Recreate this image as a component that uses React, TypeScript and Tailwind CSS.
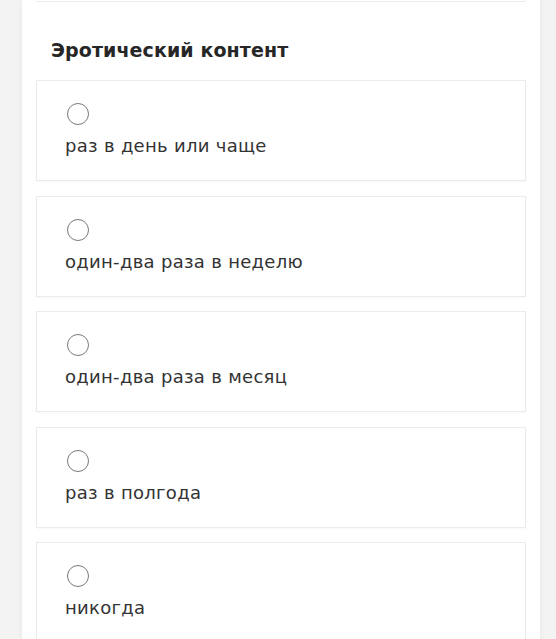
const options = [
  "раз в день или чаще",
  "один-два раза в неделю",
  "один-два раза в месяц",
  "раз в полгода",
  "никогда",
];

function Radio() {
  return (
    <span className="block h-[22px] w-[22px] rounded-full border-[1.5px] border-[#7a7a7a] bg-white" />
  );
}

export default function App() {
  return (
    <div className="min-h-[639px] overflow-hidden bg-[#f3f3f3] font-['DejaVu_Sans',sans-serif]">
      <div className="ml-[22px] min-h-[639px] w-[518px] bg-white px-[14px] shadow-[0_0_6px_rgba(0,0,0,0.06)]">
        <div className="h-[2px] rounded-b-sm border-b border-x border-[#ececec]" />
        <h2 className="mt-[36px] pl-[15px] text-[19px] font-bold leading-[24px] tracking-[0.1px] text-[#262626]">
          Эротический контент
        </h2>
        <div className="mt-[18px] flex flex-col gap-[14.5px]">
          {options.map((label) => (
            <label
              key={label}
              className="flex h-[101px] flex-col items-start border border-[#ebebeb] pl-[30px] pt-[22px] shadow-[0_1px_2px_rgba(0,0,0,0.03)]"
            >
              <Radio />
              <span className="mt-[9px] -ml-[2px] text-[18px] leading-[24px] tracking-[0.3px] text-[#333333]">
                {label}
              </span>
            </label>
          ))}
        </div>
      </div>
    </div>
  );
}
